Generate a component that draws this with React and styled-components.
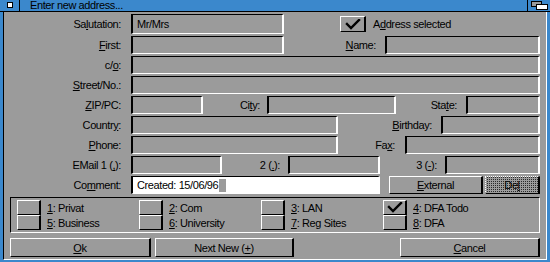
import React from 'react'
import styled, {createGlobalStyle} from "styled-components"

const GRAY = '#9b9b9b'
const BLUE = '#3b88cc'

const GlobalStyle = createGlobalStyle`
  html, body {
    margin: 0;
    padding: 0;
    background: ${GRAY};
  }
  body {
    font-family: "Liberation Sans", Arial, sans-serif;
    font-size: 11px;
    letter-spacing: -0.4px;
    color: #000;
  }
  * { box-sizing: border-box; }
`

const Window = styled.div`
    width: 550px;
    height: 262px;
    background: ${BLUE};
    display: flex;
    flex-direction: column;
`

const TitleBar = styled.div`
    height: 12px;
    border-bottom: 1px solid #000;
    display: flex;
    align-items: stretch;
`

const CloseGadget = styled.div`
    width: 20px;
    border-right: 1px solid #000;
    display: flex;
    align-items: center;
    justify-content: center;
    span{
        width: 6px;
        height: 6px;
        background: #fff;
        border: 1px solid #000;
        margin-top: -1px;
    }
`

const Title = styled.div`
    flex: 1;
    padding-left: 10px;
    line-height: 11px;
    white-space: nowrap;
`

const DepthGadget = styled.div`
    width: 23px;
    border-left: 1px solid #000;
    display: flex;
    align-items: center;
    justify-content: center;
`

const Body = styled.div`
    flex: 1;
    margin: 0 3px 2px 3px;
    background: ${GRAY};
    border-left: 1px solid #000;
    border-right: 1px solid #fff;
    border-bottom: 1px solid #fff;
    padding: 2px 6px 2px 6px;
    display: flex;
    flex-direction: column;
    gap: 2px;
`

const Row = styled.div`
    display: flex;
    align-items: stretch;
    height: ${p => p.$h || 18}px;
    flex-shrink: 0;
`

const Label = styled.div`
    width: ${p => p.$w}px;
    padding-right: ${p => p.$pr || 10}px;
    flex-shrink: 0;
    text-align: right;
    white-space: nowrap;
    display: flex;
    align-items: center;
    justify-content: flex-end;
`

const U = styled.span`
    text-decoration: underline;
    text-underline-offset: 1px;
`

const Field = styled.div`
    ${p => p.$w ? `width: ${p.$w}px; flex-shrink: 0;` : 'flex: 1;'}
    background: ${p => p.$white ? '#fff' : GRAY};
    border-style: solid;
    border-width: 1px 2px 1px 2px;
    border-color: #000 #fff #fff #000;
    padding-left: 4px;
    display: flex;
    align-items: center;
    white-space: nowrap;
    overflow: hidden;
`

const Cursor = styled.span`
    display: inline-block;
    width: 7px;
    height: 13px;
    background: ${GRAY};
    margin-left: 1px;
`

const Check = styled.div`
    width: ${p => p.$w || 24}px;
    height: ${p => p.$h || 15}px;
    background: ${GRAY};
    border-style: solid;
    border-width: 1px 2px 1px 1px;
    border-color: #fff #000 #000 #fff;
    display: flex;
    align-items: center;
    justify-content: center;
`

const CheckLabel = styled.div`
    display: flex;
    align-items: center;
    margin-left: 7px;
    white-space: nowrap;
`

const Button = styled.div`
    ${p => p.$w ? `width: ${p.$w}px; flex-shrink: 0;` : 'flex: 1;'}
    margin-left: ${p => p.$ml || 0}px;
    background: ${GRAY};
    border-style: solid;
    border-width: 1px 2px 1px 1px;
    border-color: #fff #000 #000 #fff;
    display: flex;
    align-items: center;
    justify-content: center;
    white-space: nowrap;
`

const GhostButton = styled(Button)`
    background-color: ${GRAY};
    background-image: conic-gradient(#2a2a2a 0 25%, transparent 0);
    background-size: 2px 2px;
    border-color: #fff #000 #000 #fff;
    border-style: dotted solid solid dotted;
`

const Group = styled.div`
    margin-top: 1px;
    height: 36px;
    flex-shrink: 0;
    border-style: solid;
    border-width: 1px;
    border-color: #000 #fff #fff #000;
    padding: 2px 0 2px 6px;
    display: grid;
    grid-template-columns: repeat(4, 122px);
`

const Category = styled.div`
    display: grid;
    grid-template-columns: 24px auto;
    grid-template-rows: 15px 15px;
    column-gap: 6px;
    div.text{
        display: flex;
        align-items: center;
        white-space: nowrap;
    }
`

const ButtonRow = styled(Row)`
    margin-top: 3px;
    height: 19px;
    .spacer{ flex: 1; }
`

const Tick = () => (
    <svg width="16" height="11" viewBox="0 0 16 11">
        <polyline points="2,5 6,9 14,1" fill="none" stroke="#000" strokeWidth="2.4" strokeLinecap="square" />
    </svg>
)

const categories = [
    [['1', ': Privat', false], ['5', ': Business', false]],
    [['2', ': Com', false], ['6', ': University', false]],
    [['3', ': LAN', false], ['7', ': Reg Sites', false]],
    [['4', ': DFA Todo', true], ['8', ': DFA', false]],
]

const App = () => {
  return (
    <>
      <GlobalStyle />
      <Window>
        <TitleBar>
            <CloseGadget><span /></CloseGadget>
            <Title>Enter new address...</Title>
            <DepthGadget>
                <svg width="17" height="9" viewBox="0 0 17 9">
                    <rect x="0.5" y="0.5" width="10" height="5" fill={GRAY} stroke="#000" />
                    <rect x="5.5" y="3.5" width="11" height="5" fill="#fff" stroke="#000" />
                </svg>
            </DepthGadget>
        </TitleBar>
        <Body>
            <Row $h={20}>
                <Label $w={121}>Sa<U>l</U>utation:</Label>
                <Field $w={153}>Mr/Mrs</Field>
                <div style={{width: 56}} />
                <Check $w={26} $h={16} style={{alignSelf: 'center'}}><Tick /></Check>
                <CheckLabel>A<U>d</U>dress selected</CheckLabel>
            </Row>
            <Row>
                <Label $w={121}><U>F</U>irst:</Label>
                <Field $w={153} />
                <Label $w={101} $pr={9}><U>N</U>ame:</Label>
                <Field />
            </Row>
            <Row>
                <Label $w={121}>c/<U>o</U>:</Label>
                <Field />
            </Row>
            <Row>
                <Label $w={121}><U>S</U>treet/No.:</Label>
                <Field />
            </Row>
            <Row>
                <Label $w={121}><U>Z</U>IP/PC:</Label>
                <Field $w={72} />
                <Label $w={64} $pr={7}>Ci<U>t</U>y:</Label>
                <Field $w={129} />
                <Label $w={70} $pr={9}>Sta<U>t</U>e:</Label>
                <Field />
            </Row>
            <Row>
                <Label $w={121}>Countr<U>y</U>:</Label>
                <Field $w={207} />
                <Label $w={103} $pr={9}><U>B</U>irthday:</Label>
                <Field />
            </Row>
            <Row>
                <Label $w={121}><U>P</U>hone:</Label>
                <Field $w={207} />
                <Label $w={67} $pr={10}>Fa<U>x</U>:</Label>
                <Field />
            </Row>
            <Row>
                <Label $w={121}>EMail 1 (<U>,</U>):</Label>
                <Field $w={91} />
                <Label $w={66} $pr={8}>2 (<U>.</U>):</Label>
                <Field $w={92} />
                <Label $w={65} $pr={8}>3 (<U>-</U>):</Label>
                <Field />
            </Row>
            <Row>
                <Label $w={121}>Co<U>m</U>ment:</Label>
                <Field $w={249} $white>Created: 15/06/96<Cursor /></Field>
                <Button $w={94} $ml={9}><U>E</U>xternal</Button>
                <GhostButton $ml={2}>De<U>l</U></GhostButton>
            </Row>
            <Group>
                {categories.map((col, i) => (
                    <Category key={i}>
                        <Check>{col[0][2] && <Tick />}</Check>
                        <div className='text'><U>{col[0][0]}</U>{col[0][1]}</div>
                        <Check>{col[1][2] && <Tick />}</Check>
                        <div className='text'><U>{col[1][0]}</U>{col[1][1]}</div>
                    </Category>
                ))}
            </Group>
            <ButtonRow>
                <Button $w={141}><U>O</U>k</Button>
                <Button $w={139} $ml={4}>Next New (<U>+</U>)</Button>
                <div className='spacer' />
                <Button $w={140}><U>C</U>ancel</Button>
            </ButtonRow>
        </Body>
      </Window>
    </>
  )
}

export default App
